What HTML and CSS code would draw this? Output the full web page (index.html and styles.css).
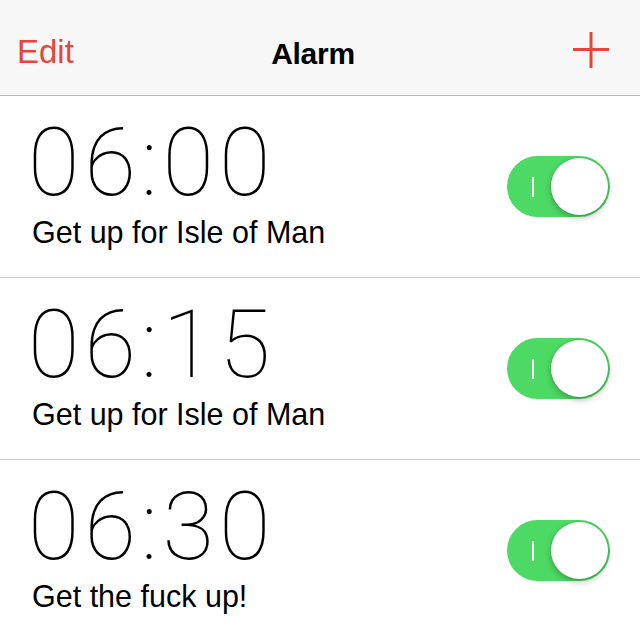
FILE: index.html
```html
<!DOCTYPE html>
<html lang="en">
<head>
  <meta charset="UTF-8" />
  <meta name="viewport" content="width=device-width, initial-scale=1.0"/>
  <title>Alarm</title>
  <link rel="stylesheet" href="styles.css">
</head>
<body>
  <header class="nav">
    <a class="nav-edit" href="#">Edit</a>
    <h1 class="nav-title">Alarm</h1>
    <button class="nav-add" title="Add alarm">
      <svg width="36" height="36" viewBox="0 0 36 36">
        <path d="M18 0V36M0 17.5H36" stroke="#e4463c" stroke-width="3" fill="none"/>
      </svg>
    </button>
  </header>

  <ul class="alarms">
    <li class="alarm">
      <div class="alarm-info">
        <p class="alarm-time">06:00</p>
        <p class="alarm-label">Get up for Isle of Man</p>
      </div>
      <div class="switch on"><span class="switch-mark"></span><span class="switch-knob"></span></div>
    </li>
    <li class="alarm">
      <div class="alarm-info">
        <p class="alarm-time">06:15</p>
        <p class="alarm-label">Get up for Isle of Man</p>
      </div>
      <div class="switch on"><span class="switch-mark"></span><span class="switch-knob"></span></div>
    </li>
    <li class="alarm">
      <div class="alarm-info">
        <p class="alarm-time">06:30</p>
        <p class="alarm-label">Get the fuck up!</p>
      </div>
      <div class="switch on"><span class="switch-mark"></span><span class="switch-knob"></span></div>
    </li>
  </ul>
</body>
</html>
```

FILE: styles.css
```css
* {
  box-sizing: border-box;
  margin: 0;
  padding: 0;
}

body {
  font-family: "Liberation Sans", Arial, sans-serif;
  background: #fff;
  color: #000;
  height: 640px;
  overflow: hidden;
}

/* Navigation bar */
.nav {
  height: 96px;
  padding: 32px 31px 0 17px;
  background: #f7f7f7;
  border-bottom: 1px solid #b9b9bd;
  display: grid;
  grid-template-columns: 1fr auto 1fr;
  align-items: start;
}

.nav-edit {
  font-size: 33px;
  line-height: 40px;
  color: #e4463c;
  text-decoration: none;
}

.nav-title {
  font-size: 30px;
  line-height: 40px;
  font-weight: 700;
  margin-top: 2px;
  letter-spacing: -0.3px;
}

.nav-add {
  justify-self: end;
  width: 36px;
  height: 36px;
  border: none;
  background: none;
  cursor: pointer;
}

.nav-add svg {
  display: block;
}

/* Alarm list */
.alarms {
  list-style: none;
}

.alarm {
  height: 182px;
  padding: 0 30px 0 32px;
  border-bottom: 1px solid #c8c7cc;
  display: flex;
  justify-content: space-between;
  align-items: center;
}

.alarm-info {
  align-self: flex-start;
  padding-top: 13px;
}

.alarm-time {
  font-family: Roboto, sans-serif;
  font-weight: 100;
  font-size: 94px;
  line-height: 108px;
  letter-spacing: 5px;
  margin-left: -4px;
}

.alarm-label {
  font-size: 30.5px;
  line-height: 30px;
}

/* Toggle switch */
.switch {
  position: relative;
  width: 103px;
  height: 61px;
  border-radius: 31px;
  background: #4cd964;
}

.switch-mark {
  position: absolute;
  left: 25px;
  top: 21px;
  width: 2px;
  height: 20px;
  background: #fff;
}

.switch-knob {
  position: absolute;
  right: 2px;
  top: 2px;
  width: 57px;
  height: 57px;
  border-radius: 50%;
  background: #fff;
  box-shadow: 0 3px 6px rgba(0, 0, 0, 0.25), 0 0 0 1px rgba(0, 0, 0, 0.06);
}
```
